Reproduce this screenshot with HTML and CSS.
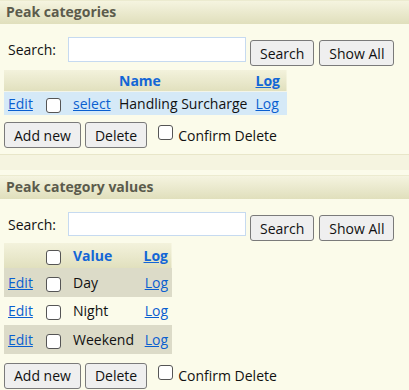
FILE: index.html
```html
<!DOCTYPE html>
<html>
<head>
<meta charset="utf-8">
<link rel="stylesheet" href="styles.css">
</head>
<body>
<div class="panel first">
  <div class="title">Peak categories</div>
  <div class="search">
    <span class="lbl">Search:</span>
    <input class="box" type="text">
    <button class="btn">Search</button>
    <button class="btn">Show All</button>
  </div>
  <table class="grid g1">
    <tr class="head">
      <th></th><th></th><th></th><th class="name">Name</th><th class="log"><a href="#">Log</a></th>
    </tr>
    <tr class="sel">
      <td class="c-edit"><a href="#">Edit</a></td>
      <td class="c-chk"><span class="chk"></span></td>
      <td class="c-sel"><a href="#">select</a></td>
      <td class="c-name">Handling Surcharge</td>
      <td class="c-log"><a href="#">Log</a></td>
    </tr>
  </table>
  <div class="actions">
    <button class="btn">Add new</button>
    <button class="btn">Delete</button>
    <span class="chk"></span>
    <span class="confirm">Confirm Delete</span>
  </div>
</div>
<div class="sep"></div>
<div class="panel second">
  <div class="title">Peak category values</div>
  <div class="search">
    <span class="lbl">Search:</span>
    <input class="box" type="text">
    <button class="btn">Search</button>
    <button class="btn">Show All</button>
  </div>
  <table class="grid g2">
    <tr class="head">
      <th></th><th class="c-chk"><span class="chk"></span></th><th class="name">Value</th><th class="log"><a href="#">Log</a></th>
    </tr>
    <tr class="alt">
      <td class="c-edit"><a href="#">Edit</a></td>
      <td class="c-chk"><span class="chk"></span></td>
      <td class="c-name">Day</td>
      <td class="c-log"><a href="#">Log</a></td>
    </tr>
    <tr>
      <td class="c-edit"><a href="#">Edit</a></td>
      <td class="c-chk"><span class="chk"></span></td>
      <td class="c-name">Night</td>
      <td class="c-log"><a href="#">Log</a></td>
    </tr>
    <tr class="alt">
      <td class="c-edit"><a href="#">Edit</a></td>
      <td class="c-chk"><span class="chk"></span></td>
      <td class="c-name">Weekend</td>
      <td class="c-log"><a href="#">Log</a></td>
    </tr>
  </table>
  <div class="actions">
    <button class="btn">Add new</button>
    <button class="btn">Delete</button>
    <span class="chk"></span>
    <span class="confirm">Confirm Delete</span>
  </div>
</div>
</body>
</html>
```

FILE: styles.css
```css
html, body {
  margin: 0;
  padding: 0;
  background: #fbfbea;
  font-family: "Open Sans", "Noto Sans", sans-serif;
  font-size: 14px;
  color: #111;
  width: 409px;
  height: 390px;
  overflow: hidden;
}
.panel {
  border-top: 1px solid #ecebd0;
}
.title {
  height: 23px;
  line-height: 22px;
  padding-left: 6px;
  font-weight: bold;
  color: #5b5b4c;
  font-size: 14px;
  background: linear-gradient(#f5f4e0, #e0dfbc);
}
.search {
  display: flex;
  align-items: flex-start;
  padding: 13px 0 4px 8px;
}
.lbl {
  width: 60px;
  line-height: 25px;
}
.box {
  width: 178px;
  height: 25px;
  box-sizing: border-box;
  border: 1px solid #c6daf0;
  background: #fff;
  margin: 0 4px 0 0;
  padding: 0;
}
.btn {
  font-family: inherit;
  font-size: 14px;
  height: 26px;
  box-sizing: border-box;
  border: 1px solid #7a7a7a;
  border-radius: 3px;
  background: #efefef;
  color: #111;
  padding: 0 9px;
  margin: 0 5px 0 0;
}
.search .btn { margin-top: 3px; }
.grid {
  border-collapse: collapse;
  margin-left: 4px;
}
.grid th, .grid td { padding: 0; white-space: nowrap; }
.grid a { color: #0a5fd0; }
.grid .head {
  background: linear-gradient(#f3f2dc, #e1e0be);
}
.grid th { font-weight: bold; color: #1366d6; text-align: left; }
.grid th.log { text-align: right; }
.grid th.log a { color: #1366d6; }
.chk {
  display: inline-block;
  width: 13px;
  height: 13px;
  border: 1px solid #555;
  border-radius: 3px;
  background: #fff;
  vertical-align: middle;
}
.g1 { width: 283px; }
.g1 .head { height: 21px; }
.g1 .sel { height: 24px; background: #d5e9f7; border-top: 1px solid #f3f5ea; }
.g1 .c-edit { width: 38px; padding-left: 4px; }
.g1 .c-chk { width: 27px; }
.g1 .c-sel { width: 46px; }
.g1 .c-name { padding-right: 8px; }
.g1 td.c-log { padding-right: 7px; }
.g1 th.log { padding-right: 7px; }
.actions {
  display: flex;
  align-items: center;
  padding-left: 4px;
  height: 26px;
}
.first .actions { margin-top: 7px; }
.actions .btn { margin-right: 4px; }
.actions .chk { margin-left: 7px; margin-right: 5px; margin-top: -6px; }
.sep {
  margin-top: 6px;
  height: 15px;
  border-top: 1px solid #e8e6c9;
  background: #f5f4e0;
  margin-bottom: 5px;
}
.second .search { padding-top: 13px; padding-bottom: 2px; }
.second .box { height: 24px; }
.g2 { width: 168px; }
.g2 .head { height: 25px; }
.g2 tr { height: 28.5px; }
.g2 .alt { background: #dcdbc8; }
.g2 .c-edit { width: 38px; padding-left: 4px; }
.g2 .c-chk { width: 27px; }
.g2 td.c-log, .g2 th.log { padding-right: 4px; text-align: right; }
.second .actions { margin-top: 9px; }
```
